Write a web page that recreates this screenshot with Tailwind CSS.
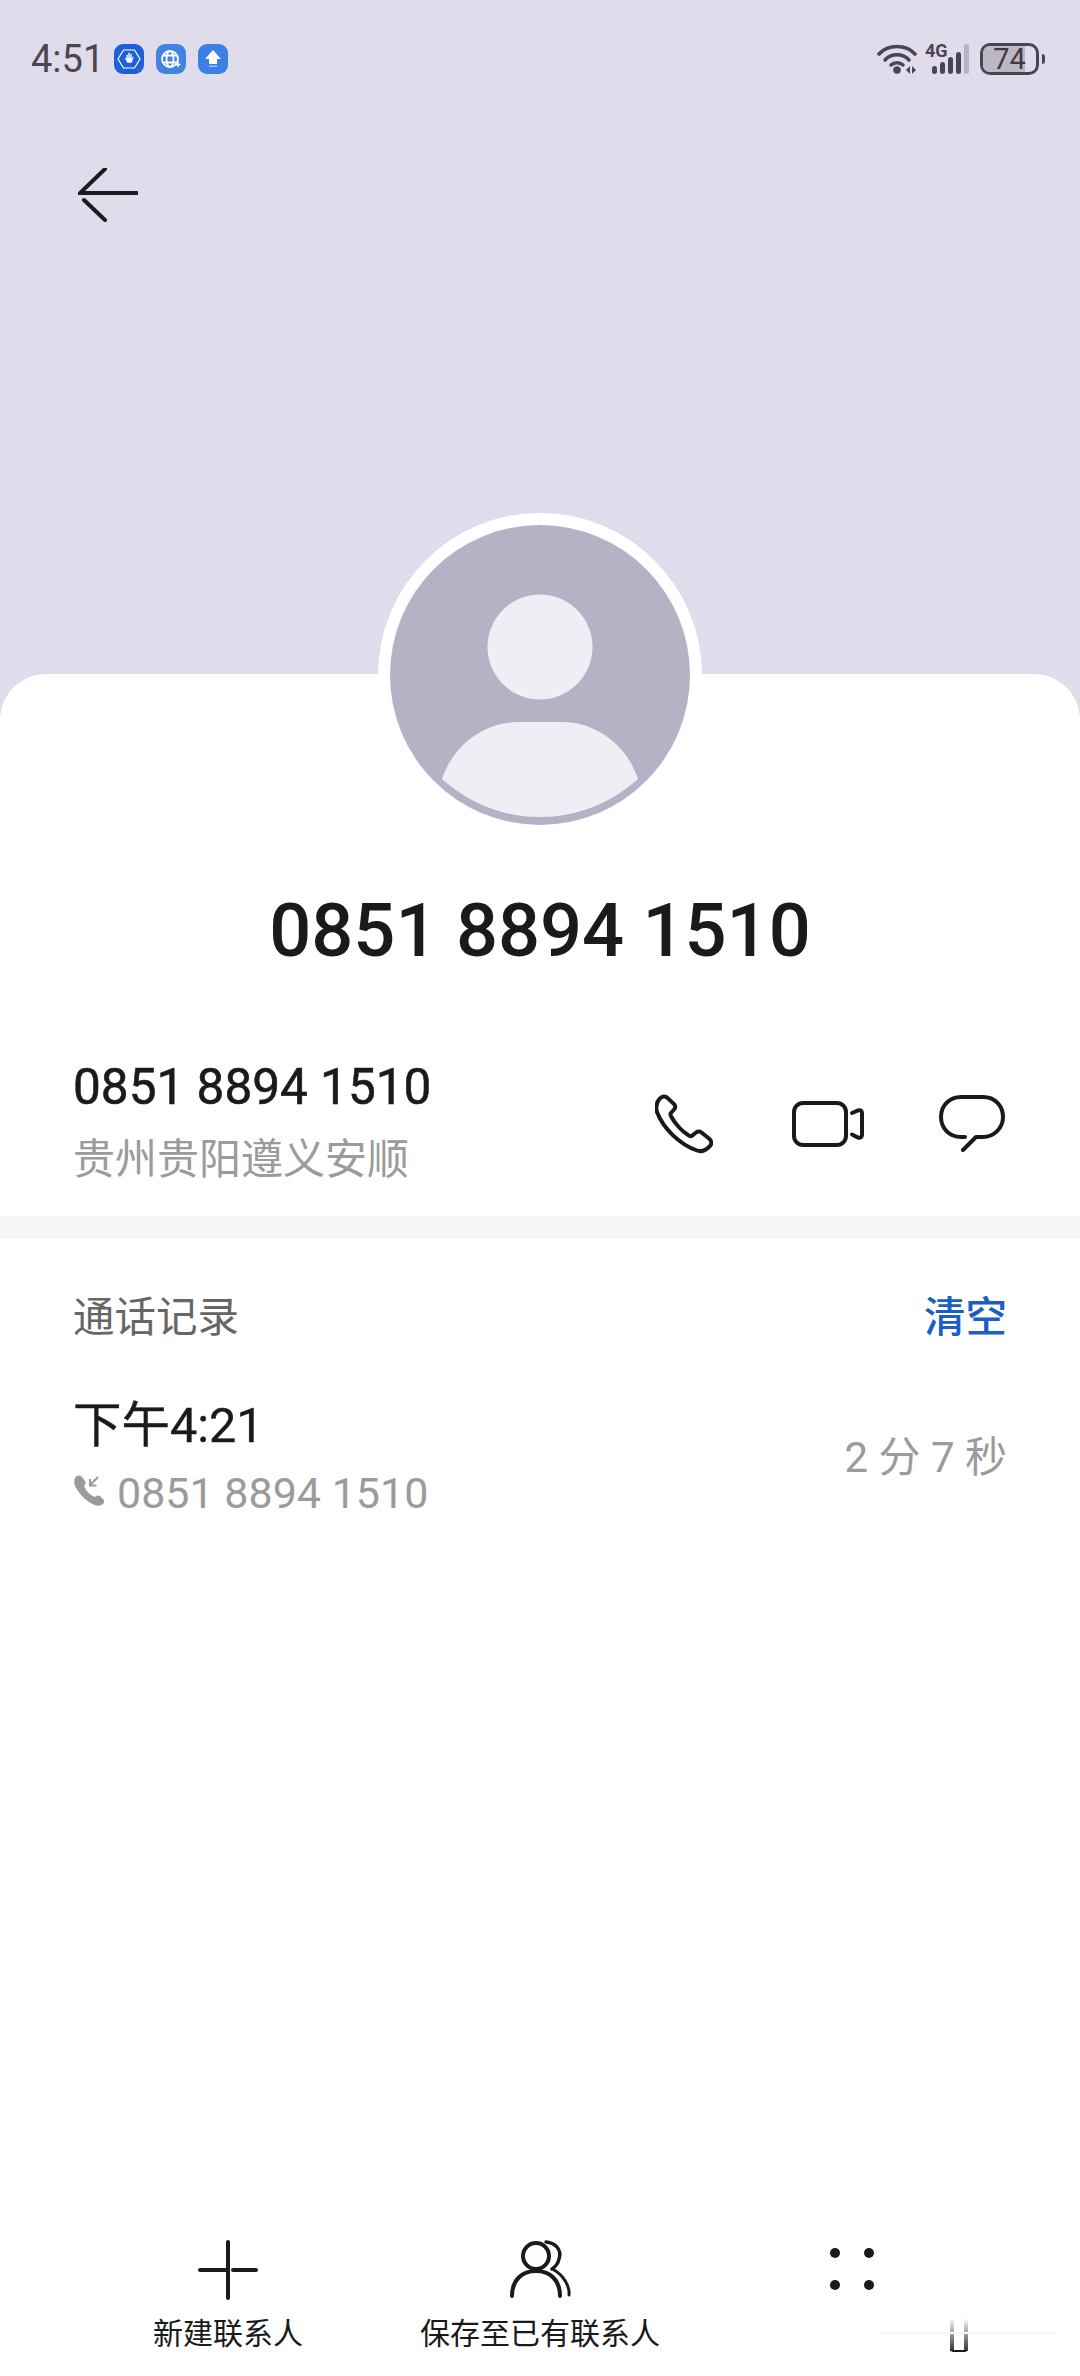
<!DOCTYPE html>
<html lang="zh-CN">
<head>
  <meta charset="UTF-8">
  <meta name="viewport" content="width=device-width, initial-scale=1.0">
  <title>通话详情</title>
  <script src="https://cdn.jsdelivr.net/npm/@tailwindcss/browser@4"></script>
</head>
<body>
<div class="relative flex flex-col w-[1080px] h-[2376px] bg-[#e1dcec] overflow-hidden font-['Roboto','Noto_Sans_CJK_SC',sans-serif]">

  <!-- status bar + back -->
  <div class="h-[674px] shrink-0">
    <div class="flex items-center justify-between h-[32px] mt-[43px] pl-[31px] pr-[35px]">
      <div class="flex items-center">
        <span class="text-[38px] leading-[32px] text-[#4a4553] w-[83px]">4:51</span>
        <div class="flex gap-[12px]">
          <div class="w-[30px] h-[30px] rounded-[9px] bg-[#1f60d8] flex items-center justify-center">
            <svg width="24" height="24" viewBox="0 0 24 24" fill="none" stroke="#fff"><path d="M6.500 3h11L23 12l-5.500 9h-11L1 12z" stroke-width="1.200"/><path d="M8 11l2.500 4.500h4L16.500 10l-2 1.500V7h-1v4h-1V6h-1v5h-1V8H9.500v4.500z" fill="#fff" stroke-width=".4"/></svg>
          </div>
          <div class="w-[30px] h-[30px] rounded-[9px] bg-[#3f84e0] flex items-center justify-center">
            <svg width="22" height="22" viewBox="0 0 22 22" fill="none" stroke="#fff" stroke-width="1.800"><circle cx="10" cy="11" r="8"/><ellipse cx="10" cy="11" rx="3.500" ry="8"/><path d="M3 7.500h14M3 14.500h14"/><path d="M18 14v5M15.500 16.500h5" stroke-width="1.400"/></svg>
          </div>
          <div class="w-[30px] h-[30px] rounded-[9px] bg-[#3a80e6] flex items-center justify-center">
            <svg width="18" height="20" viewBox="0 0 18 20" fill="#fff"><path d="M9 1L17 10H13V15H5V10H1z"/><rect x="5" y="16.500" width="8" height="1.500" opacity=".5"/></svg>
          </div>
        </div>
      </div>
      <div class="flex items-center">
        <div class="relative w-[96px] h-[32px] mr-[7px]">
          <svg width="96" height="32" viewBox="0 0 96 32" fill="none">
            <path d="M2 11C11 1 29 1 38 11" stroke="#4a4553" stroke-width="3.600" stroke-linecap="round"/>
            <path d="M8 17C14 10 26 10 32 17" stroke="#4a4553" stroke-width="3.600" stroke-linecap="round"/>
            <path d="M14 22C17 19 23 19 26 22" stroke="#4a4553" stroke-width="3.400" stroke-linecap="round"/>
            <circle cx="20" cy="27" r="3.800" fill="#4a4553"/>
            <path d="M33 23l-4 4 4 4zM35 23l4 4-4 4z" fill="#4a4553"/>
            <rect x="55" y="23" width="5" height="8" rx="2.500" fill="#4a4553"/>
            <rect x="63" y="19" width="5" height="12" rx="2.500" fill="#4a4553"/>
            <rect x="71" y="14" width="5" height="17" rx="2.500" fill="#4a4553"/>
            <rect x="79" y="9" width="5" height="22" rx="2.500" fill="#4a4553"/>
            <rect x="87" y="1" width="5" height="30" rx="2.500" fill="#b9b4c2"/>
          </svg>
          <span class="absolute left-[48px] top-[0px] text-[18px] leading-[16px] font-bold text-[#4a4553]">4G</span>
        </div>
        <div class="relative w-[59px] h-[32px] rounded-[10px] border-[3.500px] border-[#4a4553] overflow-hidden flex items-center justify-center">
          <div class="absolute left-0 top-0 bottom-0 w-[42px] bg-[#bcb7c4]"></div>
          <span class="relative text-[29px] leading-[25px] text-[#3d3946]">74</span>
        </div>
        <div class="w-[3px] h-[10px] ml-[3px] rounded-r-sm bg-[#4a4553]"></div>
      </div>
    </div>
    <svg width="60" height="54" viewBox="0 0 60 54" fill="none" stroke="#1c1a22" stroke-width="4" stroke-linecap="round" class="ml-[78px] mt-[93px]">
      <path d="M59 25H2L27 1"/>
      <path d="M6 32L27 52"/>
    </svg>
  </div>

  <!-- card -->
  <div class="flex-1 flex flex-col bg-white rounded-t-[46px]">
    <div class="relative self-center -mt-[161px] w-[324px] h-[324px] rounded-full bg-white flex items-center justify-center shrink-0">
      <svg width="300" height="300" viewBox="0 0 300 300">
        <circle cx="150" cy="150" r="150" fill="#b7b1c5"/>
        <circle cx="150" cy="122" r="52.500" fill="#efeef4"/>
        <path d="M52 254C64 218 96 197 128 197H172C204 197 236 218 248 254C220 279 186 292 150 292C114 292 80 279 52 254Z" fill="#efeef4"/>
      </svg>
    </div>

    <div class="mt-[48px] text-center text-[74px] leading-[92px] font-medium text-[#1a1a1a]">0851 8894 1510</div>

    <div class="flex items-center justify-between mt-[80px] pl-[73px] pr-[75px]">
      <div>
        <div class="text-[49.500px] leading-[60px] [-webkit-text-stroke:0.6px_#1a1a1a] text-[#1a1a1a]">0851 8894 1510</div>
        <div class="mt-[13px] text-[42px] leading-[60px] text-[#9b9b9b]">贵州贵阳遵义安顺</div>
      </div>
      <div class="flex items-center">
        <svg width="58" height="60" viewBox="0 0 58 60" fill="none" stroke="#1a1a1a" stroke-width="4">
          <path d="M4 5.500C6 3 9 1.500 12 3.500L19 10C21 12.500 20.500 14 19 15.500L16 19C15 20 15.500 21.500 16.500 23C20 30 28 38 33 41C35 42.500 36.500 42.500 38 41L41 38.500C43 37 44.500 37 46.500 38.500L54 44.500C57 47 57 50 54.500 52.500C50 57 46 58 42 56.500C24 50 8 34 2 18C.5 13 1.500 9 4 5.500Z"/>
        </svg>
        <svg width="72" height="46" viewBox="0 0 72 46" fill="none" stroke="#1a1a1a" stroke-width="4" stroke-linecap="round" class="ml-[79px]">
          <rect x="2" y="2" width="52" height="42" rx="9"/>
          <path d="M60 12L66 9.500Q70 8.500 70 12V34Q70 37.500 66 36.500L60 33.500"/>
        </svg>
        <svg width="66" height="57" viewBox="0 0 66 57" fill="none" stroke="#1a1a1a" stroke-width="4" stroke-linecap="round" stroke-linejoin="round" class="ml-[75px]">
          <path d="M26 42H22C10 42 2 33 2 22C2 10 11 2 22 2H44C56 2 64 11 64 22C64 33 55 42 44 42H37L24 55"/>
        </svg>
      </div>
    </div>

    <div class="h-[23px] mt-[26px] bg-[#f6f6f6] shrink-0"></div>

    <div class="flex items-center justify-between mt-[49px] pl-[73px] pr-[73px] text-[41.500px] leading-[60px]">
      <span class="text-[#666666]">通话记录</span>
      <span class="font-medium text-[#1a5fc4]">清空</span>
    </div>

    <div class="flex items-center justify-between mt-[48px] pl-[73px] pr-[73px]">
      <div>
        <div class="text-[48.500px] leading-[60px] [-webkit-text-stroke:0.4px_#1a1a1a] text-[#1a1a1a]">下午4:21</div>
        <div class="flex items-center mt-[12px] h-[50px]">
          <svg width="32" height="32" viewBox="0 0 32 32" fill="#9b9b9b" class="mr-[12px] -mt-[4px]">
            <path d="M2 3C4 0 7 0 9 2L12 6C13 8 12.500 9.500 11 11C13 16 17 20 22 22C23.500 20.500 25 20 27 21L30 24C32 26 31 29 28.500 30C25 31.500 21 30.500 16 27C10 23 5 17 2 11C1 8 1 5 2 3Z"/>
            <path d="M25 2L17 10M17 4V10.500H23.500" fill="none" stroke="#9b9b9b" stroke-width="2"/>
          </svg>
          <span class="text-[43px] leading-[50px] text-[#9b9b9b]">0851 8894 1510</span>
        </div>
      </div>
      <span class="text-[42px] leading-[60px] text-[#9b9b9b] mt-[2px]">2 分 7 秒</span>
    </div>

    <!-- bottom toolbar -->
    <div class="mt-auto mb-[24px] grid grid-cols-3 px-[72px] text-[30px] leading-[36px] text-[#1a1a1a]">
      <div class="flex flex-col items-center">
        <div class="h-[76px]">
          <svg width="60" height="60" viewBox="0 0 60 60" fill="none" stroke="#1a1a1a" stroke-width="4" stroke-linecap="round">
            <path d="M30 2V58M2 30H29M35 30H58"/>
          </svg>
        </div>
        <span>新建联系人</span>
      </div>
      <div class="flex flex-col items-center">
        <div class="h-[76px]">
          <svg width="62" height="60" viewBox="0 0 62 60" fill="none" stroke="#1a1a1a" stroke-linecap="round">
            <circle cx="27" cy="16" r="13" stroke-width="4"/>
            <path d="M3 56C3 40 13 31 27 31C41 31 51 40 51 56" stroke-width="4"/>
            <path d="M37 2C47 3 53 10 50 19C49 24 46 27 43 29" stroke-width="3.500"/>
            <path d="M45 30C54 35 61 46 60 55" stroke-width="3"/>
          </svg>
        </div>
        <span>保存至已有联系人</span>
      </div>
      <div class="flex flex-col items-center">
        <div class="h-[76px] pt-[8px]">
          <div class="grid grid-cols-2 gap-x-[24px] gap-y-[22px]">
            <div class="w-[10px] h-[10px] rounded-full bg-[#1a1a1a]"></div>
            <div class="w-[10px] h-[10px] rounded-full bg-[#1a1a1a]"></div>
            <div class="w-[10px] h-[10px] rounded-full bg-[#1a1a1a]"></div>
            <div class="w-[10px] h-[10px] rounded-full bg-[#1a1a1a]"></div>
          </div>
        </div>
        <span class="h-[36px]"></span>
      </div>
    </div>
  </div>

  <!-- blurred watermark residue over the toolbar -->
  <div class="absolute left-[950px] top-[2318px] w-[4px] h-[33px] bg-linear-to-b from-transparent to-[#333333]"></div>
  <div class="absolute left-[964px] top-[2318px] w-[4px] h-[33px] bg-linear-to-b from-transparent to-[#333333]"></div>
  <div class="absolute left-[951px] top-[2350px] w-[16px] h-[2px] rounded-b-full bg-[#1a1a1a]"></div>
  <div class="absolute left-[880px] top-[2332px] w-[176px] h-[2px] bg-[#f4f4f4]"></div>
</div>
</body>
</html>
